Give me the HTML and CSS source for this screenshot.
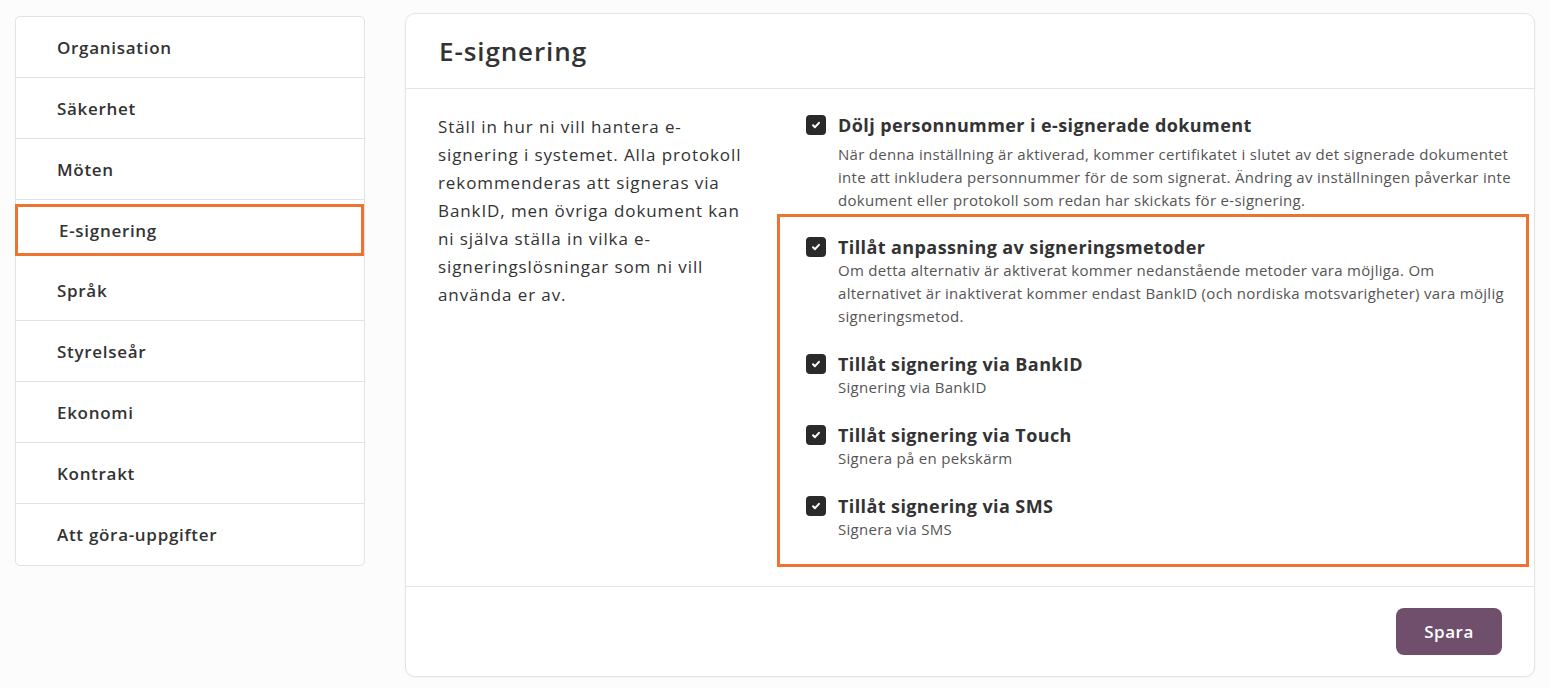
FILE: index.html
```html
<!DOCTYPE html>
<html lang="sv">

<head>
  <meta charset="utf-8">
  <meta name="viewport" content="width=device-width, initial-scale=1.0">
  <title>Inställningar - E-signering</title>
  <link rel="stylesheet" href="styles.css">
</head>

<body>
  <div class="page">
    <nav class="sidemenu">
      <a class="menu-item">Organisation</a>
      <a class="menu-item">Säkerhet</a>
      <a class="menu-item">Möten</a>
      <a class="menu-item active">E-signering</a>
      <a class="menu-item">Språk</a>
      <a class="menu-item">Styrelseår</a>
      <a class="menu-item">Ekonomi</a>
      <a class="menu-item">Kontrakt</a>
      <a class="menu-item">Att göra-uppgifter</a>
    </nav>

    <div class="card">
      <div class="card-header">
        <h1>E-signering</h1>
      </div>

      <div class="card-body">
        <p class="intro">
          Ställ in hur ni vill hantera e-signering i systemet. Alla protokoll rekommenderas att signeras via
          BankID, men övriga dokument kan ni själva ställa in vilka e-signeringslösningar som ni vill använda er av.
        </p>

        <div class="options">
          <label class="option first">
            <span class="checkbox"><svg viewBox="0 0 12 12"><path d="M3 6.2l2 2 4-4.4" /></svg></span>
            <span class="option-text">
              <span class="option-title">Dölj personnummer i e-signerade dokument</span>
              <span class="option-desc">När denna inställning är aktiverad, kommer certifikatet i slutet av det signerade dokumentet
                inte att inkludera personnummer för de som signerat. Ändring av inställningen påverkar inte
                dokument eller protokoll som redan har skickats för e-signering.</span>
            </span>
          </label>

          <div class="methods">
            <label class="option">
              <span class="checkbox"><svg viewBox="0 0 12 12"><path d="M3 6.2l2 2 4-4.4" /></svg></span>
              <span class="option-text">
                <span class="option-title">Tillåt anpassning av signeringsmetoder</span>
                <span class="option-desc">Om detta alternativ är aktiverat kommer nedanstående metoder vara möjliga. Om
                  alternativet är inaktiverat kommer endast BankID (och nordiska motsvarigheter) vara möjlig
                  signeringsmetod.</span>
              </span>
            </label>

            <label class="option">
              <span class="checkbox"><svg viewBox="0 0 12 12"><path d="M3 6.2l2 2 4-4.4" /></svg></span>
              <span class="option-text">
                <span class="option-title">Tillåt signering via BankID</span>
                <span class="option-desc">Signering via BankID</span>
              </span>
            </label>

            <label class="option">
              <span class="checkbox"><svg viewBox="0 0 12 12"><path d="M3 6.2l2 2 4-4.4" /></svg></span>
              <span class="option-text">
                <span class="option-title">Tillåt signering via Touch</span>
                <span class="option-desc">Signera på en pekskärm</span>
              </span>
            </label>

            <label class="option">
              <span class="checkbox"><svg viewBox="0 0 12 12"><path d="M3 6.2l2 2 4-4.4" /></svg></span>
              <span class="option-text">
                <span class="option-title">Tillåt signering via SMS</span>
                <span class="option-desc">Signera via SMS</span>
              </span>
            </label>
          </div>
        </div>
      </div>

      <div class="card-footer">
        <button class="save_button">Spara</button>
      </div>
    </div>
  </div>
</body>

</html>
```

FILE: styles.css
```css
* {
  font-family: 'Open Sans', 'Lato', Arial, sans-serif;
  margin: 0;
  padding: 0;
  box-sizing: border-box;
}

body {
  background: #fcfcfc;
  color: #333;
}

.page {
  display: flex;
  align-items: flex-start;
  gap: 40px;
  padding: 13px 15px 10px 15px;
}

/* Side menu */
.sidemenu {
  width: 350px;
  margin-top: 3px;
  display: flex;
  flex-direction: column;
  background: #fff;
  border: 1px solid #e2e2e2;
  border-radius: 5px;
}

.menu-item {
  display: flex;
  align-items: center;
  height: 61px;
  padding-left: 41px;
  font-size: 17px;
  font-weight: 600;
  letter-spacing: 0.7px;
  color: #333;
  border-bottom: 1px solid #e2e2e2;
}

.menu-item:last-child {
  border-bottom: none;
}

.menu-item.active {
  height: 52px;
  margin: 4px 0 4px -1px;
  border: 3px solid #ee7330;
}

/* Card */
.card {
  flex: 1;
  height: 664px;
  display: flex;
  flex-direction: column;
  background: #fff;
  border: 1px solid #e4e4e4;
  border-radius: 10px;
  box-shadow: 0 1px 3px rgba(0, 0, 0, 0.04);
}

.card-header {
  flex: none;
  height: 75px;
  padding: 0 33px;
  display: flex;
  align-items: center;
  border-bottom: 1px solid #e4e4e4;
}

h1 {
  font-size: 26px;
  font-weight: 600;
  letter-spacing: 0.9px;
  color: #333;
}

.card-body {
  flex: 1;
  display: flex;
  padding: 24px 5px 0 32px;
  border-bottom: 1px solid #e4e4e4;
}

.intro {
  width: 318px;
  font-size: 17px;
  line-height: 28px;
  letter-spacing: 0.9px;
  color: #333;
}

.options {
  flex: 1;
  margin-left: 21px;
  display: flex;
  flex-direction: column;
}

.option {
  display: flex;
  gap: 12px;
  padding-left: 29px;
}

.options > .option {
  margin-bottom: 2px;
}

.option.first .option-desc {
  margin-top: 6px;
}

.methods {
  border: 3px solid #ee7330;
  padding: 18px 0 23px 0;
  display: flex;
  flex-direction: column;
  gap: 24px;
}

.methods .option {
  padding-left: 26px;
}

.checkbox {
  flex: none;
  width: 20px;
  height: 20px;
  margin-top: 2px;
  border-radius: 4px;
  background: #2a2a2a;
  display: flex;
  align-items: center;
  justify-content: center;
}

.checkbox svg {
  width: 12px;
  height: 12px;
  fill: none;
  stroke: #fff;
  stroke-width: 2;
  stroke-linecap: round;
  stroke-linejoin: round;
}

.option-text {
  display: flex;
  flex-direction: column;
}

.option-title {
  font-size: 18px;
  font-weight: 700;
  line-height: 24px;
  letter-spacing: 0.4px;
  color: #333;
}

.option-desc {
  font-size: 15px;
  line-height: 23px;
  letter-spacing: 0.3px;
  color: #555;
  padding-right: 5px;
}

.card-footer {
  flex: none;
  height: 89px;
  display: flex;
  align-items: center;
  justify-content: flex-end;
  padding: 0 32px 0 0;
}

.save_button {
  background: #6f4f6b;
  border: none;
  border-radius: 8px;
  color: #fff;
  width: 106px;
  height: 47px;
  font-size: 17px;
  font-weight: 600;
  letter-spacing: 0.5px;
  cursor: pointer;
}
```
